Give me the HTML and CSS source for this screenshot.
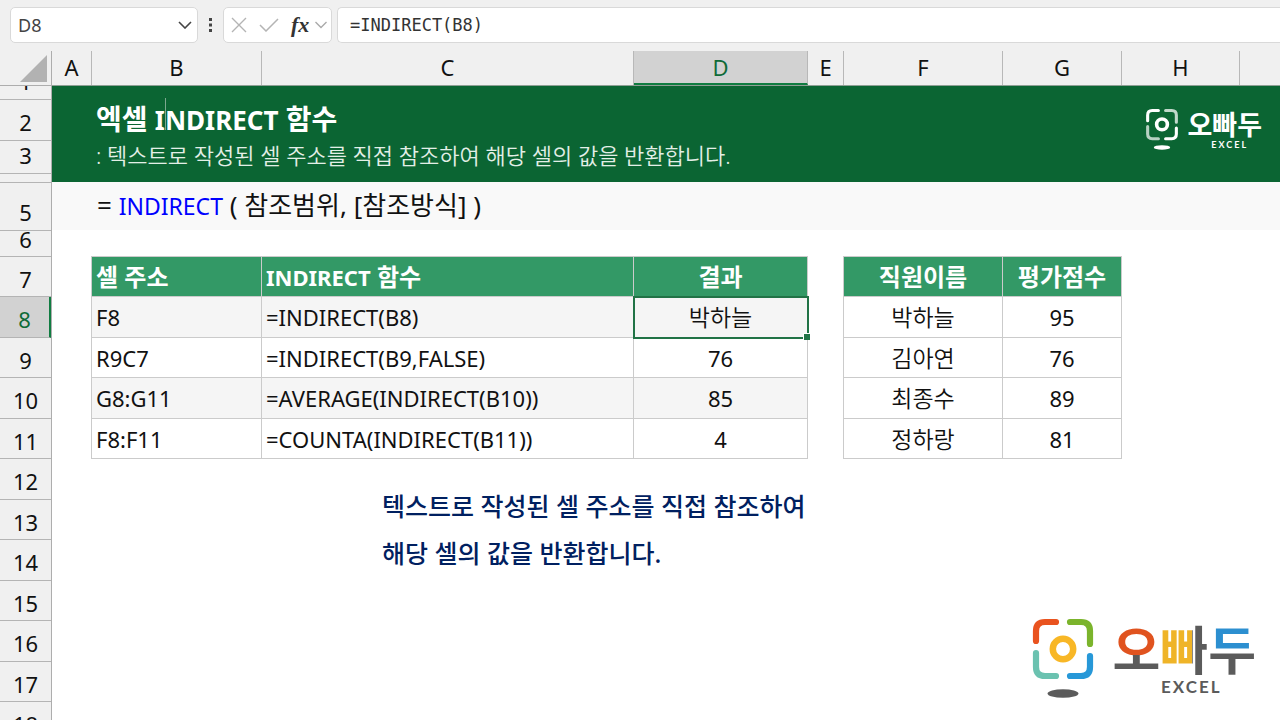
FILE: index.html
```html
<!DOCTYPE html>
<html lang="ko">
<head>
<meta charset="utf-8">
<title>엑셀 INDIRECT 함수</title>
<link rel="stylesheet" href="styles.css">
</head>
<body>
<header class="formula-bar">
  <div class="name-box">
    <input class="name-input" type="text" value="D8" aria-label="Name box">
    <button class="icon-btn" type="button" aria-label="Name list"><svg width="14" height="8" viewBox="0 0 14 8"><path d="M1 1l6 6 6-6" fill="none" stroke="#444" stroke-width="1.6"/></svg></button>
  </div>
  <svg class="dots" width="4" height="14" viewBox="0 0 4 14"><path d="M0 0h3v3H0zM0 5.500h3v3H0zM0 11h3v3H0z" fill="#444"/></svg>
  <div class="actions">
    <button class="icon-btn" type="button" aria-label="Cancel"><svg width="16" height="16" viewBox="0 0 16 16"><path d="M1 1l14 14M15 1L1 15" fill="none" stroke="#b4b4b4" stroke-width="1.400"/></svg></button>
    <button class="icon-btn" type="button" aria-label="Enter"><svg width="20" height="14" viewBox="0 0 20 14"><path d="M1 7l6 6L19 1" fill="none" stroke="#b4b4b4" stroke-width="1.500"/></svg></button>
    <button class="icon-btn fx" type="button">fx</button>
    <button class="icon-btn" type="button" aria-label="Function list"><svg width="12" height="8" viewBox="0 0 12 8"><path d="M0.500 1l5.500 5.500L11.500 1" fill="none" stroke="#aaa" stroke-width="1.400"/></svg></button>
  </div>
  <input class="formula-input" type="text" value="=INDIRECT(B8)" aria-label="Formula">
</header>

<div class="sheet">
  <div class="row-heads">
    <div class="corner"><svg width="27" height="27" viewBox="0 0 27 27"><path d="M27 0v27H0z" fill="#b2b2b2"/></svg></div>
    <div class="rh r1"><span>1</span></div>
    <div class="rh r2"><span>2</span></div>
    <div class="rh r3"><span>3</span></div>
    <div class="rh r4"></div>
    <div class="rh r5"><span>5</span></div>
    <div class="rh r6"><span>6</span></div>
    <div class="rh">7</div>
    <div class="rh tall active">8</div>
    <div class="rh">9</div>
    <div class="rh tall">10</div>
    <div class="rh">11</div>
    <div class="rh tall">12</div>
    <div class="rh">13</div>
    <div class="rh tall">14</div>
    <div class="rh">15</div>
    <div class="rh tall">16</div>
    <div class="rh">17</div>
    <div class="rh tall">18</div>
  </div>
  <div class="area">
    <div class="col-heads">
      <div>A</div><div>B</div><div>C</div><div class="active">D</div><div>E</div><div>F</div><div>G</div><div>H</div><div></div>
    </div>
    <div class="banner">
      <div class="banner-text">
        <h1>엑셀 <span class="latin">I<span class="caret"></span>NDIRECT</span> 함수</h1>
        <p>: 텍스트로 작성된 셀 주소를 직접 참조하여 해당 셀의 값을 반환합니다.</p>
      </div>
      <div class="brand small">
        <svg width="32" height="41" viewBox="0 0 62 80"><g fill="none" stroke="#fff" stroke-width="6" stroke-linecap="round"><path d="M3 23V12Q3 3 12 3H24"/><path d="M38 3H50Q59 3 59 12V26" opacity=".75"/><path d="M3 34V49Q3 58 12 58H24" opacity=".7"/><path d="M38 58H50Q59 58 59 49V37"/><circle cx="31" cy="30" r="10.500" stroke-width="7"/></g><ellipse cx="31" cy="75" rx="16" ry="4.500" fill="#fff"/></svg>
        <div class="word"><div class="kor">오빠두</div><div class="eng">EXCEL</div></div>
      </div>
    </div>
    <div class="syntax">= <span class="fn">INDIRECT</span> ( 참조범위, [참조방식] )</div>
    <div class="tables">
      <table class="examples">
        <colgroup><col class="cb"><col class="cc"><col class="cd"></colgroup>
        <thead><tr><th>셀 주소</th><th><span class="latin">INDIRECT</span> 함수</th><th class="mid">결과</th></tr></thead>
        <tbody>
          <tr class="tall"><td>F8</td><td>=INDIRECT(B8)</td><td class="mid name selected">박하늘</td></tr>
          <tr><td>R9C7</td><td>=INDIRECT(B9,FALSE)</td><td class="mid">76</td></tr>
          <tr class="tall"><td>G8:G11</td><td>=AVERAGE(INDIRECT(B10))</td><td class="mid">85</td></tr>
          <tr><td>F8:F11</td><td>=COUNTA(INDIRECT(B11))</td><td class="mid">4</td></tr>
        </tbody>
      </table>
      <table class="scores">
        <colgroup><col class="cf"><col class="cg"></colgroup>
        <thead><tr><th>직원이름</th><th>평가점수</th></tr></thead>
        <tbody>
          <tr class="tall"><td class="name">박하늘</td><td>95</td></tr>
          <tr><td class="name">김아연</td><td>76</td></tr>
          <tr class="tall"><td class="name">최종수</td><td>89</td></tr>
          <tr><td class="name">정하랑</td><td>81</td></tr>
        </tbody>
      </table>
    </div>
    <p class="note">텍스트로 작성된 셀 주소를 직접 참조하여<br>해당 셀의 값을 반환합니다.</p>
    <div class="brand large">
      <svg width="62" height="80" viewBox="0 0 62 80"><g fill="none" stroke-width="6.200" stroke-linecap="round"><path d="M4 23V13Q4 4 13 4H24" stroke="#e9531f"/><path d="M38 4H49Q58 4 58 13V26" stroke="#7bb42c"/><path d="M4 35V49Q4 58 13 58H24" stroke="#6bc2b0"/><path d="M38 58H49Q58 58 58 49V38" stroke="#2798d8"/><circle cx="31" cy="31" r="10.200" stroke="#f8b726" stroke-width="6.500"/></g><ellipse cx="31" cy="75.500" rx="15.500" ry="4.300" fill="#5b5b5b"/></svg>
      <div class="word"><div class="kor"><span class="k1">오</span><span class="k2">빠</span><span class="k3">두</span></div><div class="eng">EXCEL</div></div>
    </div>
  </div>
</div>
</body>
</html>
```
FILE: styles.css
```css
* { box-sizing: border-box; }
body {
  margin: 0;
  height: 100vh;
  display: flex;
  flex-direction: column;
  overflow: hidden;
  background: #f0f0f0;
  color: #111;
  font-family: "Noto Sans", "Noto Sans CJK KR", sans-serif;
  font-size: 22px;
}
h1, p { margin: 0; }

.formula-bar {
  display: flex;
  flex: none;
  align-items: center;
  height: 51px;
  padding: 7px 0 8px 10px;
}
.name-box, .actions, .formula-input {
  height: 36px;
  background: #fff;
  border: 1px solid #d9d9d9;
  border-radius: 5px;
}
.name-box { display: flex; align-items: center; width: 188px; padding: 0 5px 0 7px; }
.name-input {
  flex: 1;
  min-width: 0;
  padding: 0;
  border: 0;
  background: none;
  color: #444;
  font: 18px "Noto Sans", sans-serif;
}
.icon-btn { display: flex; padding: 0; border: 0; background: none; }
.dots { margin: 0 10px 0 11px; }
.actions { display: flex; align-items: center; gap: 12px; width: 109px; padding: 0 2px 0 7px; }
.fx { color: #333; font: italic bold 22px/28px "Liberation Serif", serif; }
.actions .fx + .icon-btn { margin-left: -6px; }
.formula-input {
  flex: 1;
  min-width: 0;
  margin-left: 5px;
  padding: 0 12px;
  border-right: 0;
  border-radius: 5px 0 0 5px;
  color: #333;
  font: 17px "DejaVu Sans Mono", monospace;
}

.sheet { display: flex; flex: 1; min-height: 0; }
.row-heads { flex: none; width: 52px; border-right: 1px solid #adadad; overflow: hidden; }
.corner { display: flex; justify-content: flex-end; height: 35px; padding: 4px 4px 0 0; border-bottom: 1px solid #adadad; }
.rh {
  display: flex;
  align-items: center;
  justify-content: center;
  height: 40px;
  padding-top: 4px;
  border-bottom: 1px solid #b4b4b4;
  line-height: 24px;
  overflow: hidden;
}
.rh.tall { height: 41px; }
.rh.r1 { height: 14px; align-items: flex-end; padding: 0 0 6px; }
.rh.r2 { height: 41px; }
.rh.r3 { height: 33px; padding: 0 0 4px; }
.rh.r4 { height: 9px; }
.rh.r5 { height: 48px; padding-top: 10px; }
.rh.r6 { height: 26px; align-items: flex-start; padding: 0; line-height: 16px; }
.rh.active { background: #d2d2d2; color: #0f6b38; border-right: 2px solid #107c41; }

.area { position: relative; flex: 1; min-width: 0; background: #fff; }
.col-heads {
  display: grid;
  grid-template-columns: 40px 170px 372px 174px 36px 159px 119px 118px 1fr;
  height: 35px;
  border-bottom: 1px solid #8f9f95;
  background: #f0f0f0;
  line-height: 32px;
  text-align: center;
}
.col-heads div { border-right: 1px solid #b8b8b8; }
.col-heads div:last-child { border-right: 0; }
.col-heads .active { background: #d2d2d2; color: #0f6b38; border-bottom: 2px solid #107c41; }

.banner {
  display: flex;
  justify-content: space-between;
  align-items: flex-start;
  height: 96px;
  padding: 14px 18px 0 44px;
  background: #0b6533;
  color: #fff;
}
h1 { font-size: 28px; line-height: 38px; }
h1 .latin { font-size: 26px; }
.banner p { font-size: 22px; line-height: 32px; font-weight: 350; color: #e3efe7; }
.caret { position: relative; }
.caret::before { content: ""; position: absolute; left: 0; top: -4px; width: 1px; height: 32px; background: #7da88f; }

.syntax { height: 48px; padding-left: 45px; background: #f9f9f9; font-size: 26px; line-height: 46px; }
.fn { color: #00f; font-size: 23px; }

.tables { display: flex; gap: 35px; padding: 26px 0 0 39px; }
table { table-layout: fixed; border-collapse: collapse; }
.examples { width: 717px; }
.scores { width: 279px; }
.cb { width: 170px; }
.cc { width: 372px; }
.cd { width: 174px; }
.cf { width: 159px; }
.cg { width: 119px; }
tr { height: 40px; }
tr.tall { height: 41px; }
th, td { padding: 0 4px; border: 1px solid #cbcbcb; line-height: 30px; text-align: left; }
th { background: #339966; color: #fff; font-size: 24px; }
th .latin { font-size: 22px; }
.name { padding-bottom: 2px; font-size: 23px; font-weight: 350; }
.examples .tall td { background: #f5f5f5; }
.scores th, .scores td, .mid { text-align: center; }
.selected { position: relative; outline: 2px solid #217346; outline-offset: -1px; }
.selected::after {
  content: "";
  position: absolute;
  right: -3px;
  bottom: -3px;
  width: 6px;
  height: 6px;
  border-top: 1px solid #fff;
  border-left: 1px solid #fff;
  background: #217346;
}

.note { padding: 24px 0 0 330px; color: #002060; font-size: 25px; font-weight: 500; line-height: 47px; }
.name { font-family: "Noto Sans CJK KR", sans-serif; }

.brand { display: flex; }
.word { display: flex; flex-direction: column; align-items: center; }
.kor { font-family: "Noto Sans CJK KR", sans-serif; font-weight: 700; }
.eng { font-family: Lato, sans-serif; font-weight: 700; letter-spacing: 2px; }
.small { gap: 9px; padding-top: 9px; }
.small .kor { font-size: 27px; line-height: 30px; }
.small .eng { padding-left: 10px; font-size: 9px; line-height: 12px; }
.large { position: absolute; right: 24px; bottom: 22px; gap: 18px; }
.large .kor { display: flex; font-size: 52px; line-height: 60px; }
.large .eng { padding-left: 14px; color: #5b5b5b; font-size: 17px; line-height: 18px; }
.large .kor span { color: transparent; background-clip: text; -webkit-background-clip: text; }
.large .k1 { background-image: linear-gradient(#e0531f 62%, #5b5b5b 62%); }
.large .k2 { background-image: linear-gradient(90deg, #efb428 67%, #5b5b5b 67%); }
.large .k3 { background-image: linear-gradient(#2c8fd0 54%, #5b5b5b 54%); }
```
